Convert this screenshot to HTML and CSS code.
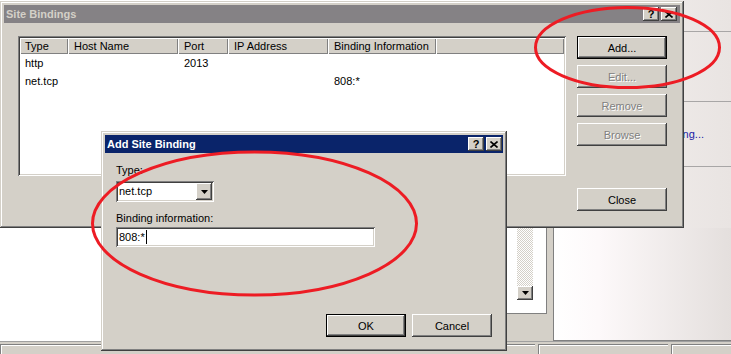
FILE: index.html
```html
<!DOCTYPE html>
<html lang="en">
<head>
    <meta charset="UTF-8">
    <title>Site Bindings</title>
    <link rel="stylesheet" href="styles.css">
</head>
<body>
<div class="screen">

    <!-- IIS manager behind the dialogs -->
    <div class="actions">
        <div class="actions-row actions-head"></div>
        <div class="actions-row actions-mid"></div>
        <div class="actions-row actions-link"><span class="link">ng...</span></div>
    </div>

    <div class="lower">
        <div class="lower-left"></div>
        <div class="side-gap">
            <div class="side-box">
                <div class="scroll">
                    <div class="scroll-track"></div>
                    <div class="scroll-btn">
                        <svg width="7" height="4" viewBox="0 0 7 4"><path d="M0 0H7L3.5 4Z" fill="#000"/></svg>
                    </div>
                </div>
            </div>
        </div>
        <div class="content-panel"></div>
    </div>

    <div class="statusbar">
        <div class="status-cell s1"></div>
        <div class="status-cell s2"></div>
        <div class="status-cell s3"></div>
    </div>

    <!-- Site Bindings window -->
    <div class="window site-bindings">
        <div class="titlebar">
            <span class="title-text">Site Bindings</span>
            <span class="cap-btn">?</span>
            <span class="cap-btn">
                <svg width="8" height="7" viewBox="0 0 8 7"><path d="M0.5 0.5L7.5 6.5M7.5 0.5L0.5 6.5" stroke="#000" stroke-width="1.6"/></svg>
            </span>
        </div>
        <div class="sb-body">
            <div class="list">
                <div class="list-head">
                    <span>Type</span><span>Host Name</span><span>Port</span><span>IP Address</span><span>Binding Information</span><span></span>
                </div>
                <div class="list-row">
                    <span>http</span><span></span><span>2013</span><span></span><span></span><span></span>
                </div>
                <div class="list-row">
                    <span>net.tcp</span><span></span><span></span><span></span><span>808:*</span><span></span>
                </div>
            </div>
            <div class="btn-col">
                <div class="btn default">Add...</div>
                <div class="btn disabled">Edit...</div>
                <div class="btn disabled">Remove</div>
                <div class="btn disabled">Browse</div>
                <div class="btn btn-close">Close</div>
            </div>
        </div>
    </div>

    <!-- Add Site Binding dialog -->
    <div class="window dialog">
        <div class="titlebar">
            <span class="title-text">Add Site Binding</span>
            <span class="cap-btn">?</span>
            <span class="cap-btn">
                <svg width="8" height="7" viewBox="0 0 8 7"><path d="M0.5 0.5L7.5 6.5M7.5 0.5L0.5 6.5" stroke="#000" stroke-width="1.6"/></svg>
            </span>
        </div>
        <div class="dlg-body">
            <div class="field-label">Type:</div>
            <div class="combo">
                <span class="combo-text">net.tcp</span>
                <span class="combo-btn">
                    <svg width="7" height="4" viewBox="0 0 7 4"><path d="M0 0H7L3.5 4Z" fill="#000"/></svg>
                </span>
            </div>
            <div class="field-label second">Binding information:</div>
            <div class="textbox">808:*<span class="caret"></span></div>
            <div class="dlg-footer">
                <div class="btn default dlg-btn">OK</div>
                <div class="btn dlg-btn">Cancel</div>
            </div>
        </div>
    </div>

    <!-- red marker circles -->
    <svg class="marks" width="731" height="354" viewBox="0 0 731 354">
        <ellipse cx="627.5" cy="47.5" rx="92" ry="40" fill="none" stroke="#ed1c24" stroke-width="3"/>
        <ellipse cx="254.5" cy="223.5" rx="162" ry="71.5" fill="none" stroke="#ed1c24" stroke-width="3"/>
    </svg>
</div>
</body>
</html>
```

FILE: styles.css
```css
* {
    box-sizing: border-box;
}
body {
    margin: 0;
    width: 731px;
    height: 354px;
    overflow: hidden;
    background: #fff;
    font-family: "Liberation Sans", Arial, sans-serif;
    font-size: 11px;
    color: #000;
}
.screen {
    position: relative;
    width: 731px;
    height: 354px;
}
/* Background manager */
.actions {
    position: absolute;
    left: 540px;
    top: 0;
    width: 191px;
    height: 228px;
    display: flex;
    flex-direction: column;
    background: linear-gradient(90deg, #f7f4f3, #e9e4e2);
}
.actions-row {
    border-bottom: 1px solid #a8a6a6;
}
.actions-head {
    height: 32px;
}
.actions-mid {
    height: 70px;
}
.actions-link {
    height: 65px;
    display: flex;
    align-items: center;
    justify-content: flex-end;
    padding-right: 27px;
}
.link {
    color: #1a1aa6;
    white-space: nowrap;
}
.lower {
    position: absolute;
    left: 0;
    top: 228px;
    width: 731px;
    height: 113px;
    display: flex;
}
.lower-left {
    width: 506px;
    background: #fff;
}
.side-gap {
    width: 47px;
    background: #d4d0c8;
    padding-right: 6px;
    padding-bottom: 27px;
}
.side-box {
    height: 100%;
    background: #fff;
    border-right: 1px solid #808080;
    border-bottom: 1px solid #808080;
    padding-left: 11px;
}
.scroll {
    width: 16px;
    height: 72px;
    display: flex;
    flex-direction: column;
}
.scroll-track {
    flex: 1;
    background: repeating-conic-gradient(#d4d0c8 0 25%, #fff 0 50%) 0 0 / 2px 2px;
}
.scroll-btn {
    height: 14px;
    display: flex;
    align-items: center;
    justify-content: center;
    background: #d4d0c8;
    box-shadow: inset -1px -1px #404040, inset 1px 1px #fff, inset -2px -2px #808080;
}
.content-panel {
    flex: 1;
    border-left: 1px solid #808080;
    border-bottom: 1px solid #808080;
    background: linear-gradient(90deg, #fff 0, #fdf9fa 25%, #e4dfdd 100%);
}
.statusbar {
    position: absolute;
    left: 0;
    top: 341px;
    width: 731px;
    height: 13px;
    display: flex;
    gap: 3px;
    padding-top: 2px;
    background: #d4d0c8;
    border-top: 1px solid #a0a0a0;
}
.status-cell {
    border-top: 1px solid #808080;
    border-left: 1px solid #808080;
    box-shadow: inset 1px 1px #fff;
}
.s1 {
    width: 535px;
}
.s2 {
    width: 130px;
}
.s3 {
    flex: 1;
}
/* Windows */
.window {
    position: absolute;
    display: flex;
    flex-direction: column;
    padding: 4px;
    background: #d4d0c8;
    box-shadow: inset -1px -1px #404040, inset 1px 1px #d4d0c8, inset -2px -2px #808080, inset 2px 2px #fff;
}
.site-bindings {
    left: 0;
    top: 1px;
    width: 684px;
    height: 227px;
}
.dialog {
    left: 101px;
    top: 131px;
    width: 406px;
    height: 220px;
}
.titlebar {
    height: 18px;
    display: flex;
    align-items: center;
    padding: 0 3px 0 2px;
    font-weight: bold;
}
.site-bindings .titlebar {
    background: #858285;
    color: #d4d0c8;
}
.dialog .titlebar {
    background: #0a246a;
    color: #fff;
    padding-right: 1px;
}
.title-text {
    flex: 1;
}
.cap-btn {
    width: 16px;
    height: 14px;
    display: flex;
    align-items: center;
    justify-content: center;
    background: #d4d0c8;
    color: #000;
    font-size: 11px;
    line-height: 14px;
    box-shadow: inset -1px -1px #404040, inset 1px 1px #fff, inset -2px -2px #808080;
}
.cap-btn + .cap-btn {
    margin-left: 2px;
}
/* Site Bindings body */
.sb-body {
    flex: 1;
    display: flex;
    gap: 11px;
    padding: 13px 13px 13px 14px;
}
.list {
    width: 548px;
    height: 140px;
    padding: 2px;
    background: #fff;
    box-shadow: inset 1px 1px #808080, inset -1px -1px #fff, inset 2px 2px #404040, inset -2px -2px #d4d0c8;
}
.list-head,
.list-row {
    display: grid;
    grid-template-columns: 48px 110px 50px 100px 108px 1fr;
}
.list-head span {
    height: 16px;
    line-height: 17px;
    padding-left: 6px;
    background: #d4d0c8;
    box-shadow: inset 1px 1px #fff, inset -1px -1px #808080;
    white-space: nowrap;
}
.list-head span:first-child {
    padding-left: 5px;
}
.list-row span {
    height: 18px;
    line-height: 19px;
    padding-left: 6px;
}
.list-row span:first-child {
    padding-left: 5px;
}
.btn-col {
    width: 90px;
    display: flex;
    flex-direction: column;
    gap: 6px;
}
.btn {
    height: 23px;
    display: flex;
    align-items: center;
    justify-content: center;
    background: #d4d0c8;
    box-shadow: inset -1px -1px #404040, inset 1px 1px #fff, inset -2px -2px #808080;
}
.btn.default {
    box-shadow: inset 0 0 0 1px #000, inset -2px -2px #404040, inset 2px 2px #fff, inset -3px -3px #808080;
}
.btn.disabled {
    color: #808080;
    text-shadow: 1px 1px 0 #fff;
}
.btn-close {
    margin-top: auto;
}
/* Add Site Binding body */
.dlg-body {
    flex: 1;
    display: flex;
    flex-direction: column;
    padding: 11px 11px 10px 11px;
}
.field-label {
    line-height: 13px;
}
.field-label.second {
    margin-top: 10px;
}
.combo {
    margin-top: 4px;
    width: 98px;
    height: 21px;
    display: flex;
    padding: 2px;
    background: #fff;
    box-shadow: inset 1px 1px #808080, inset -1px -1px #fff, inset 2px 2px #404040, inset -2px -2px #d4d0c8;
}
.combo-text {
    flex: 1;
    padding-left: 1px;
    line-height: 17px;
}
.combo-btn {
    width: 16px;
    height: 17px;
    display: flex;
    align-items: center;
    justify-content: center;
    background: #d4d0c8;
    box-shadow: inset -1px -1px #404040, inset 1px 1px #fff, inset -2px -2px #808080;
}
.textbox {
    margin-top: 2px;
    width: 259px;
    height: 20px;
    display: flex;
    align-items: center;
    padding: 2px 3px;
    background: #fff;
    box-shadow: inset 1px 1px #808080, inset -1px -1px #fff, inset 2px 2px #404040, inset -2px -2px #d4d0c8;
}
.caret {
    width: 1px;
    height: 14px;
    margin-left: 1px;
    background: #000;
}
.dlg-footer {
    margin-top: auto;
    display: flex;
    justify-content: flex-end;
    gap: 6px;
}
.dlg-btn {
    width: 80px;
}
/* Red markers */
.marks {
    position: absolute;
    left: 0;
    top: 0;
    pointer-events: none;
}
```
